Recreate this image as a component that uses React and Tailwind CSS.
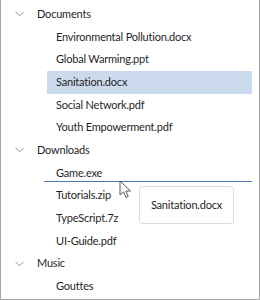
import React from 'react';

const tree = [
  {
    label: 'Documents',
    children: [
      'Environmental Pollution.docx',
      'Global Warming.ppt',
      'Sanitation.docx',
      'Social Network.pdf',
      'Youth Empowerment.pdf',
    ],
  },
  {
    label: 'Downloads',
    children: ['Game.exe', 'Tutorials.zip', 'TypeScript.7z', 'UI-Guide.pdf'],
  },
  {
    label: 'Music',
    children: ['Gouttes'],
  },
];

const Chevron = () => (
  <svg width="9" height="6" viewBox="0 0 9 6" className="shrink-0">
    <path d="M0.5 0.8 L4.5 4.8 L8.5 0.8" fill="none" stroke="#8a94a6" strokeWidth="1" />
  </svg>
);

const Cursor = () => (
  <svg width="14" height="20" viewBox="0 0 14 20">
    <path
      d="M1 1 L1 15 L4.5 11.8 L7 17.5 L9.2 16.5 L6.8 11 L11.5 11 Z"
      fill="#ffffff"
      stroke="#555555"
      strokeWidth="1"
      strokeLinejoin="round"
    />
  </svg>
);

export default function App() {
  return (
    <div
      className="relative w-[260px] h-[300px] bg-white border-x border-b border-[#a8a8a8] overflow-hidden text-[11px] tracking-[-0.2px] text-[#1f1f1f]"
      style={{ fontFamily: 'Lato, "Noto Sans", sans-serif' }}
    >
      <div className="flex flex-col pt-[3px]">
        {tree.map((node) => (
          <div key={node.label} className="flex flex-col">
            <div className="flex items-center h-[22.67px] pl-[14px] gap-[13px]">
              <Chevron />
              <span>{node.label}</span>
            </div>
            {node.children.map((child) => (
              <div
                key={child}
                className={
                  'flex items-center h-[22.67px] ml-[46px] mr-[7px] pl-[9px] ' +
                  (child === 'Sanitation.docx' ? 'bg-[#ccdaee]' : '')
                }
              >
                {child}
              </div>
            ))}
          </div>
        ))}
      </div>

      {/* drop indicator */}
      <div className="absolute left-[43px] right-[7px] top-[181px] h-px bg-[#4a78b8]" />

      {/* cursor */}
      <div className="absolute left-[118px] top-[180px]">
        <Cursor />
      </div>

      {/* drag tooltip */}
      <div className="absolute left-[138px] top-[186px] w-[95px] h-[38px] flex items-center justify-center bg-white border border-[#dcdcdc] rounded-[3px]">
        Sanitation.docx
      </div>
    </div>
  );
}
